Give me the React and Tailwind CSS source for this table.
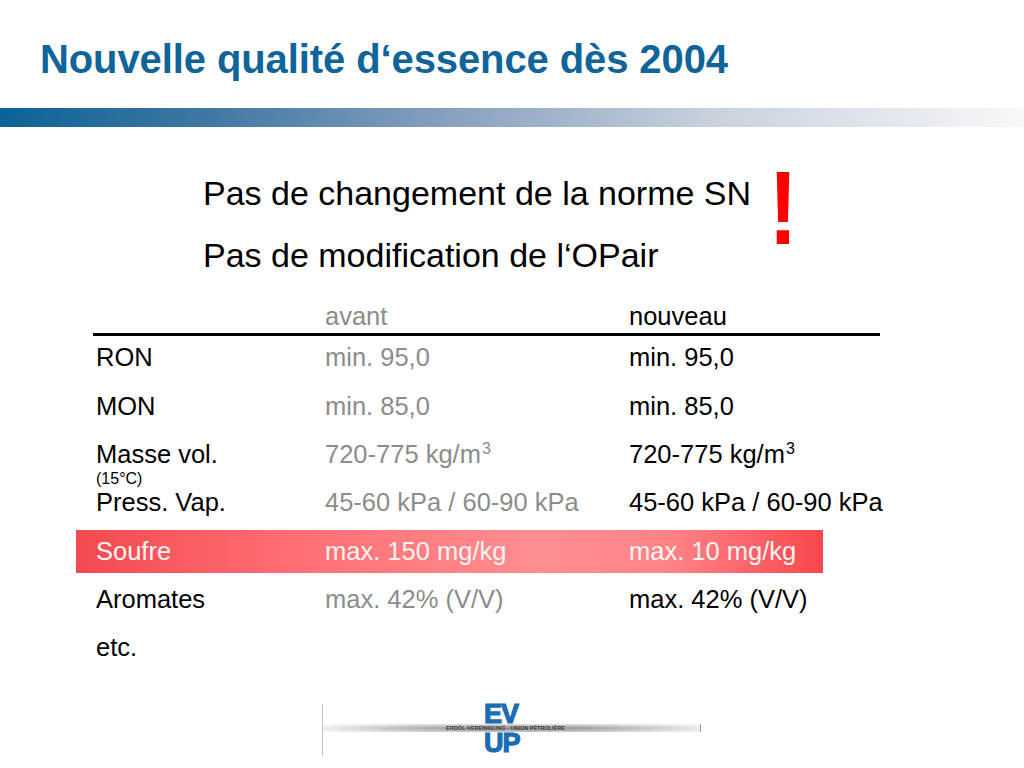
export default function App() {
  const rows = [
    { a: "RON", b: "min. 95,0", c: "min. 95,0" },
    { a: "MON", b: "min. 85,0", c: "min. 85,0" },
    { a: "Masse vol.", b: "720-775 kg/m", c: "720-775 kg/m", sup: true, note: "(15°C)" },
    { a: "Press. Vap.", b: "45-60 kPa / 60-90 kPa", c: "45-60 kPa / 60-90 kPa" },
    { a: "Soufre", b: "max. 150 mg/kg", c: "max. 10 mg/kg", hl: true },
    { a: "Aromates", b: "max. 42% (V/V)", c: "max. 42% (V/V)" },
    { a: "etc.", b: "", c: "" },
  ];
  return (
    <div className="w-[1024px] h-[768px] bg-white overflow-hidden font-['Liberation_Sans',Arial,sans-serif] flex flex-col">
      <div className="pt-[39px] pl-[40px] text-[40px] leading-none font-bold text-[#0f6599] tracking-[-0.1px] whitespace-nowrap">
        Nouvelle qualité d‘essence dès 2004
      </div>
      <div className="mt-[29px] h-[19px] w-full bg-[linear-gradient(90deg,#0c6397_0%,#3f77a3_20%,#8aa2c0_45%,#c8d2de_70%,#f7f8fa_100%)]" />

      <div className="mt-[35px] pl-[203px] flex items-start">
        <div className="w-[563px] text-[34px] leading-[62px] text-black whitespace-nowrap">
          <div>Pas de changement de la norme SN</div>
          <div>Pas de modification de l‘OPair</div>
        </div>
        <div className="-mt-[5px] text-[103px] leading-none font-bold text-[#ff0000] scale-x-[0.85]">!</div>
      </div>

      <div className="mt-[14px] pl-[76px] flex flex-col text-[25.5px]">
        <div className="h-[33px] pl-[20px] grid grid-cols-[229px_304px_auto] items-center leading-none">
          <div />
          <div className="text-[#8c8c8c]">avant</div>
          <div className="text-black">nouveau</div>
        </div>
        <div className="ml-[17px] w-[787px] h-[3px] bg-black" />
        <div className="-mt-[2px] flex flex-col">
          {rows.map((r, i) => (
            <div key={i} className="h-[48.33px] flex items-center">
              <div
                className={
                  "h-[43px] pl-[20px] grid grid-cols-[229px_304px_auto] items-center whitespace-nowrap leading-none " +
                  (r.hl
                    ? "w-[747px] bg-[linear-gradient(90deg,#f34a50_0%,#ff6f74_30%,#ff8e91_62%,#ff8286_80%,#f9474d_100%)] text-[#fff3f3]"
                    : "w-[810px]")
                }
              >
                <div className={"relative " + (r.hl ? "" : "text-black")}>
                  {r.a}
                  {r.note && (
                    <div className="absolute left-0 top-[29px] text-[16px] leading-none text-black">{r.note}</div>
                  )}
                </div>
                <div className={r.hl ? "" : "text-[#8c8c8c]"}>
                  {r.b}
                  {r.sup && <span className="inline-block text-[16px] leading-none align-top -mt-[1px] ml-[1px]">3</span>}
                </div>
                <div className={r.hl ? "" : "text-black"}>
                  {r.c}
                  {r.sup && <span className="inline-block text-[16px] leading-none align-top -mt-[1px] ml-[1px]">3</span>}
                </div>
              </div>
            </div>
          ))}
        </div>
      </div>

      <div className="mt-[32px] ml-[322px] relative w-[380px] h-[52px] border-l border-[#c4c4c4]">
        <div className="mt-[20px] h-[8px] w-[378px] border-r border-[#9a9a9a] bg-[linear-gradient(180deg,#e0e0e0,#8e8e8e_50%,#c4c4c4)] flex items-center">
          <div className="h-full w-full bg-[linear-gradient(90deg,rgba(255,255,255,0.85)_0%,rgba(255,255,255,0.3)_25%,rgba(255,255,255,0)_45%,rgba(255,255,255,0.15)_70%,rgba(255,255,255,0.8)_100%)] flex items-center">
            <span className="ml-[123px] text-[5.5px] leading-none font-bold text-[#3c3c3c] whitespace-nowrap">
              ERDÖL-VEREINIGUNG · UNION PÉTROLIÈRE
            </span>
          </div>
        </div>
        <div className="absolute left-[161px] top-0 flex flex-col items-start font-bold text-[#1b6db3] text-[27px] leading-none tracking-[-1px] [-webkit-text-stroke:1.2px_#1b6db3]">
          <div className="h-[20px] leading-[21px]">EV</div>
          <div className="mt-[8px] h-[23px] leading-[23px]">UP</div>
        </div>
      </div>
    </div>
  );
}
